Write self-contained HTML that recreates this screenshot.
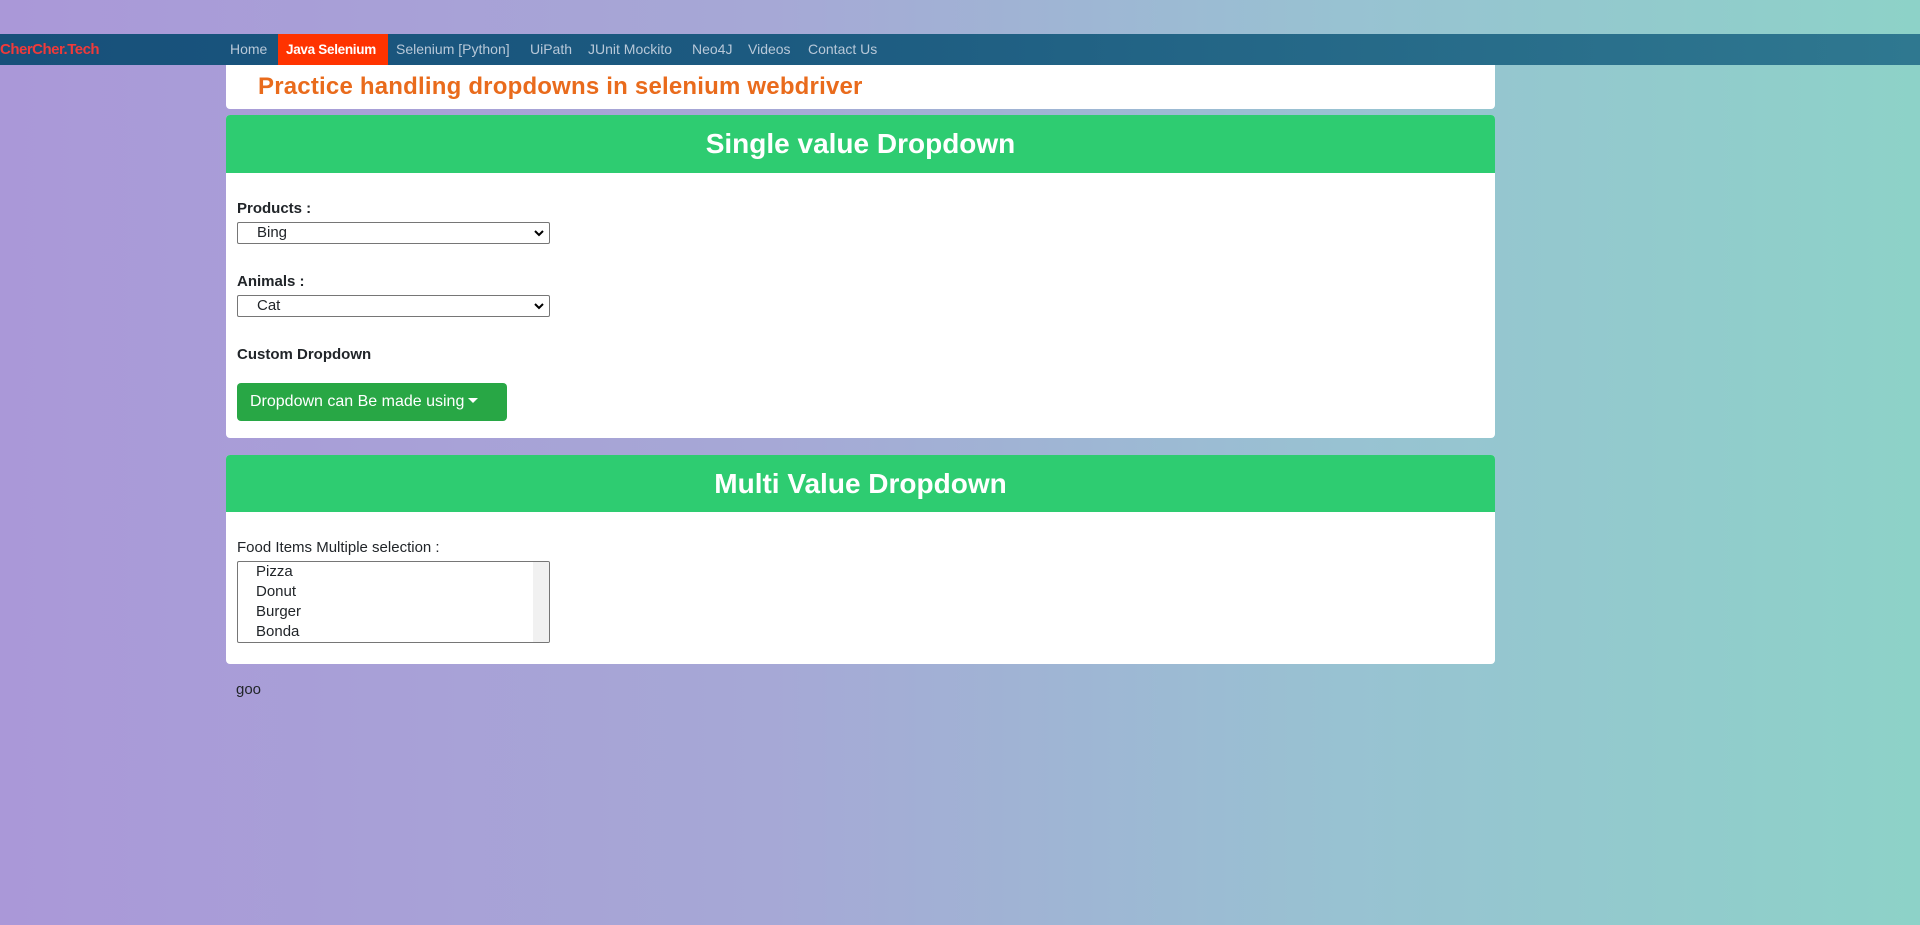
<!DOCTYPE html>
<html><head><meta charset="utf-8"><style>
*{box-sizing:border-box;margin:0;padding:0}
html,body{width:1920px;height:925px;overflow:hidden}
body{font-family:"Liberation Sans",sans-serif;background:linear-gradient(90deg,#aa98d8 0%,#a6a8d6 40%,#98c2d2 70%,#8dd2c8 100%);position:relative;color:#212529}
.nav{position:absolute;left:0;top:34px;width:1920px;height:31px;background:linear-gradient(90deg,#17507a 0%,#1c5a80 40%,#2f7890 100%)}
.logo{position:absolute;left:0;top:7px;color:#f03a3a;font-weight:bold;font-size:15px;letter-spacing:-0.5px}
.nav a{position:absolute;top:0;height:31px;line-height:31px;font-size:14px;color:#b8c8d8;text-decoration:none;padding:0 7px;white-space:nowrap}
.nav a.act{background:#ff3300;color:#fff;font-weight:bold;padding:0 0 0 8px;font-size:13.5px;letter-spacing:-0.3px}
.box{position:absolute;left:226px;width:1269px;background:#fff;border-radius:4px}
.title{top:65px;height:44px;border-radius:0 0 4px 4px}
.title h1{position:absolute;left:32px;top:8px;color:#e96b1c;font-size:24px;font-weight:bold;white-space:nowrap;letter-spacing:0.2px}
.ch{background:#2ecc71;height:58px;border-radius:4px 4px 0 0;color:#fff;font-weight:bold;font-size:28px;text-align:center;line-height:58px}
.lbl{position:absolute;left:11px;font-weight:bold;font-size:15px}
.sel{position:absolute;left:11px;width:313px;height:22px;border:1px solid #767676;border-radius:2px;font-size:15px;padding-left:19px;line-height:20px}
.sel svg{position:absolute;right:5px;top:6px}
.btn{position:absolute;left:11px;width:270px;height:38px;background:#28a745;border-radius:4px;color:#fff;font-size:16px;line-height:38px;padding-left:13px;white-space:nowrap}
.caret{display:inline-block;margin-left:4px;vertical-align:3px;border:5px solid transparent;border-top-color:#fff;border-bottom:0}
.list{position:absolute;left:11px;top:106px;width:313px;height:82px;border:1px solid #767676;border-radius:2px;font-size:15px;padding:0 0 0 18px;overflow:hidden}
.list .it{height:20px;line-height:20px}
.sb{position:absolute;right:0;top:0;width:16px;height:80px;background:#f1f1f1}
</style></head><body>
<div class="nav"><div class="logo">CherCher.Tech</div>
<a style="left:223px">Home</a><a class="act" style="left:278px;width:110px">Java Selenium</a><a style="left:389px">Selenium [Python]</a><a style="left:523px">UiPath</a><a style="left:581px">JUnit Mockito</a><a style="left:685px">Neo4J</a><a style="left:741px">Videos</a><a style="left:801px">Contact Us</a></div>
<div class="box title"><h1>Practice handling dropdowns in selenium webdriver</h1></div>
<div class="box" style="top:115px;height:323px">
<div class="ch">Single value Dropdown</div>
<div class="lbl" style="top:85px">Products :</div>
<div class="sel" style="top:107px">Bing<svg width="10" height="8"><path d="M1 2l4 4 4-4" stroke="#000" stroke-width="2" fill="none"/></svg></div>
<div class="lbl" style="top:158px">Animals :</div>
<div class="sel" style="top:180px">Cat<svg width="10" height="8"><path d="M1 2l4 4 4-4" stroke="#000" stroke-width="2" fill="none"/></svg></div>
<div class="lbl" style="top:231px">Custom Dropdown</div>
<div class="btn" style="top:268px">Dropdown can Be made using<span class="caret"></span></div>
</div>
<div class="box" style="top:455px;height:209px">
<div class="ch" style="height:57px;line-height:57px">Multi Value Dropdown</div>
<div style="position:absolute;left:11px;top:84px;font-size:15px">Food Items Multiple selection :</div>
<div class="list"><div class="it">Pizza</div><div class="it">Donut</div><div class="it">Burger</div><div class="it">Bonda</div><div class="sb"></div></div>
</div>
<div style="position:absolute;left:236px;top:681px;font-size:15px">goo</div>
</body></html>
